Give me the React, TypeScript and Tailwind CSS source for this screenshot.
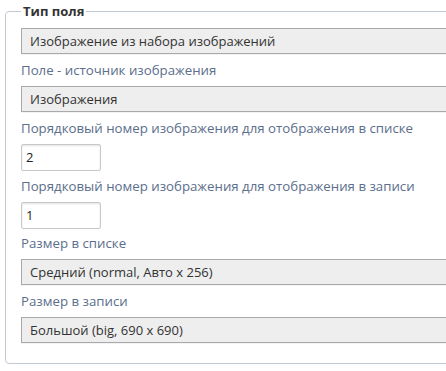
import React from "react";

const font = { fontFamily: '"Open Sans", "Noto Sans", Arial, sans-serif' };

function Label({ children, mt }: { children: React.ReactNode; mt: string }) {
  return (
    <div
      className={
        mt +
        " mb-[6px] h-[19px] text-[13.25px] leading-[19px] text-[#5b6e8c] whitespace-nowrap"
      }
    >
      {children}
    </div>
  );
}

function Select({ children }: { children: React.ReactNode }) {
  return (
    <div className="h-[26px] w-[440px] border border-[#a9a9a9] bg-[#eeeeee] pl-[8px] text-[13px] leading-[24px] text-[#333333] shadow-[0_1px_0_#f3f3f3] whitespace-nowrap">
      {children}
    </div>
  );
}

function NumInput({ value }: { value: string }) {
  return (
    <div className="h-[27px] w-[80px] rounded-[2px] border border-[#c8c8c8] bg-white pl-[4px] text-[13px] leading-[25px] text-[#222222] shadow-[inset_0_1px_2px_rgba(0,0,0,0.12)]">
      {value}
    </div>
  );
}

export default function App() {
  return (
    <div className="h-[371px] w-[446px] overflow-hidden bg-white" style={font}>
      <fieldset className="ml-[5px] mt-[4px] w-[470px] rounded-[4px] border border-[#c3cad2] pl-[15px] pt-[9px] pb-[20px]">
        <legend className="px-[2px] text-[13px] font-bold leading-[15px] text-[#333333]">Тип поля</legend>
        <Select>Изображение из набора изображений</Select>
        <Label mt="mt-[7px]">Поле - источник изображения</Label>
        <Select>Изображения</Select>
        <Label mt="mt-[7px]">Порядковый номер изображения для отображения в списке</Label>
        <NumInput value="2" />
        <Label mt="mt-[6px]">Порядковый номер изображения для отображения в записи</Label>
        <NumInput value="1" />
        <Label mt="mt-[5px]">Размер в списке</Label>
        <Select>Средний (normal, Авто x 256)</Select>
        <Label mt="mt-[7px]">Размер в записи</Label>
        <Select>Большой (big, 690 x 690)</Select>
      </fieldset>
    </div>
  );
}
